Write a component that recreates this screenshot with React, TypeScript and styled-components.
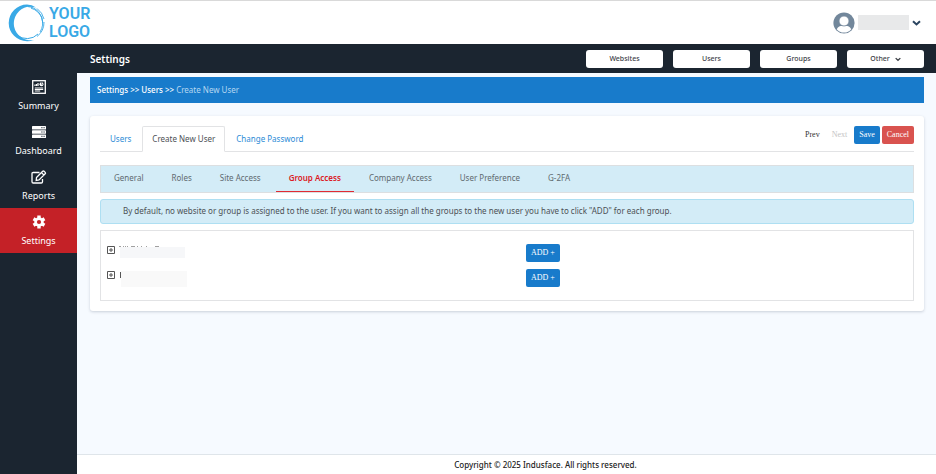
import React from "react";
import styled, { createGlobalStyle, css } from "styled-components";

const color = {
  navy: "#1b2530",
  red: "#c42127",
  blue: "#187bcb",
  sky: "#d3ecf7",
  page: "#f6faff",
  line: "#e2e3e5",
  text: "#4c5055",
};

const GlobalStyle = createGlobalStyle`
  *, *::before, *::after { box-sizing: border-box; }
  body {
    margin: 0;
    background: ${color.page};
    color: ${color.text};
    font: 8px/12px "Noto Sans", sans-serif;
  }
  a { color: inherit; text-decoration: none; }
  button { font: inherit; cursor: pointer; }
  h1, p, ul { margin: 0; padding: 0; }
  ul { list-style: none; }
`;

const Page = styled.div`
  display: flex;
  flex-direction: column;
  min-height: 100vh;
`;

const Header = styled.header`
  display: flex;
  align-items: center;
  justify-content: space-between;
  height: 44px;
  padding: 0 15px 0 8px;
  background: #fff;
  border-top: 1px solid #d9d9d9;
`;

const Logo = styled.a`
  display: flex;
  align-items: center;
  gap: 4px;
  color: #39a9e6;
  font: 600 16px/18px Roboto, sans-serif;
`;

const LogoText = styled.span`
  display: block;
  width: min-content;
`;

const Account = styled.button`
  display: flex;
  align-items: center;
  gap: 3px;
  padding: 0;
  border: 0;
  background: none;
`;

const AccountName = styled.span`
  width: 51px;
  height: 15px;
  background: #e8e9ea;
`;

const Body = styled.div`
  display: flex;
  flex: 1;
`;

const Sidebar = styled.nav`
  flex: 0 0 77px;
  padding-top: 29px;
  background: ${color.navy};
`;

const SideLink = styled.a<{ $active?: boolean }>`
  display: flex;
  flex-direction: column;
  align-items: center;
  gap: 5px;
  height: 45px;
  padding-top: 7px;
  color: #fff;
  font-size: 9px;
  line-height: 14px;
  background: ${(p) => (p.$active ? color.red : "transparent")};
`;

const Main = styled.div`
  display: flex;
  flex: 1;
  flex-direction: column;
  min-width: 0;
`;

const TitleBar = styled.div`
  display: flex;
  align-items: center;
  justify-content: space-between;
  height: 29px;
  padding: 0 12px 0 13px;
  background: ${color.navy};
`;

const Title = styled.h1`
  color: #fff;
  font-size: 10px;
  font-weight: 600;
  line-height: 16px;
`;

const TitleActions = styled.div`
  display: flex;
  gap: 10px;
`;

const TitleButton = styled.button`
  display: flex;
  align-items: center;
  justify-content: center;
  gap: 5px;
  width: 77px;
  height: 18px;
  padding: 0;
  border: 0;
  border-radius: 3px;
  background: #fff;
  color: #3c4046;
  font-size: 7px;
  font-weight: 500;
`;

const Content = styled.main`
  display: flex;
  flex: 1;
  flex-direction: column;
  gap: 13px;
  padding: 4px 12px 24px 13px;
`;

const Breadcrumb = styled.nav`
  display: flex;
  align-items: center;
  gap: 2px;
  height: 26px;
  padding: 0 7px;
  background: ${color.blue};
  color: #fff;
  font-weight: 500;
`;

const Crumb = styled.span`
  color: #b5d7f1;
  font-weight: 400;
`;

const Card = styled.section`
  padding: 10px;
  border-radius: 3px;
  background: #fff;
  box-shadow: 0 1px 3px rgba(40, 60, 80, 0.22);
`;

const CardTop = styled.div`
  display: flex;
  align-items: flex-start;
  justify-content: space-between;
  height: 26px;
  margin-bottom: 13px;
  border-bottom: 1px solid ${color.line};
`;

const Tabs = styled.div`
  display: flex;
  gap: 1px;
`;

const Tab = styled.a<{ $active?: boolean }>`
  display: flex;
  align-items: center;
  height: 26px;
  padding: 0 9px;
  border: 1px solid transparent;
  color: #2b8bd6;
  ${(p) =>
    p.$active &&
    css`
      border-color: ${color.line};
      border-bottom-color: #fff;
      border-radius: 2px 2px 0 0;
      background: #fff;
      color: ${color.text};
    `}
`;

const FormActions = styled.div`
  display: flex;
  gap: 2px;
`;

const actionLook = {
  plain: { bg: "transparent", fg: "#333" },
  primary: { bg: color.blue, fg: "#fff" },
  danger: { bg: "#d9534f", fg: "#fff" },
};

const ActionButton = styled.button<{ $look: keyof typeof actionLook }>`
  height: 18px;
  padding: 0 5px;
  border: 0;
  border-radius: 2px;
  background: ${(p) => actionLook[p.$look].bg};
  color: ${(p) => actionLook[p.$look].fg};
  font: 8px/12px "Liberation Serif", serif;
  &:disabled {
    color: #c4c4c4;
    cursor: default;
  }
`;

const SubNav = styled.nav`
  display: flex;
  gap: 2px;
  height: 28px;
  border: 1px solid #dcdfe1;
  background: ${color.sky};
`;

const SubLink = styled.a<{ $active?: boolean }>`
  padding: 6px 13px 0;
  color: #5f6a70;
  border-bottom: 1px solid transparent;
  ${(p) =>
    p.$active &&
    css`
      border-color: #e02b33;
      color: #dc1a25;
      font-weight: 600;
    `}
`;

const Notice = styled.p`
  margin: 6px 0;
  padding: 5px 22px 6px;
  border: 1px solid #aedff2;
  border-radius: 3px;
  background: ${color.sky};
`;

const GroupList = styled.ul`
  display: grid;
  gap: 7px;
  padding: 13px 6px;
  border: 1px solid ${color.line};
`;

const GroupRow = styled.li`
  display: grid;
  grid-template-columns: 1fr 1fr;
  height: 18px;
`;

const GroupName = styled.div`
  display: flex;
  gap: 4px;
`;

const ExpandButton = styled.button`
  display: flex;
  width: 8px;
  height: 12px;
  padding: 2px 0;
  border: 0;
  background: none;
`;

const RowAction = styled.div`
  padding-left: 19px;
`;

const Footer = styled.footer`
  padding: 4px 0 3px 78px;
  border-top: 1px solid #dfe5ea;
  background: #fff;
  color: #222;
  font-weight: 500;
  text-align: center;
`;

const LogoMark = () => (
  <svg width="37" height="38" viewBox="0 0 37 38" fill="none" stroke="#39a9e6" aria-hidden="true">
    <path
      d="M19 .8A18.2 18.2 0 1 0 26 35.7A17 17 0 0 1 19 .8Z"
      fill="none"
      strokeWidth="0"
    />
    <path d="M28 3.5A18 18 0 0 0 19 .6A18.3 18.3 0 0 0 19 37.2A18 18 0 0 0 26 36A16.8 16.8 0 0 1 19.5 2.8Q24 2.4 28 3.5Z" fill="#39a9e6" strokeWidth="0" />
    <path d="M19.5 2.5A16.6 16.6 0 0 1 34.8 19" strokeWidth="1" />
    <path d="M23 4.2A15.6 15.6 0 0 1 32 28" strokeWidth="0.9" />
    <path d="M29 4.5A18 18 0 0 1 36 15M36 18A18 18 0 0 1 29 32.5" strokeWidth="0.9" />
    <path d="M9 31A15.5 15.5 0 0 0 30 30" strokeWidth="1" />
  </svg>
);

const Avatar = () => (
  <svg width="22" height="22" viewBox="0 0 22 22" aria-hidden="true">
    <circle cx="11" cy="11" r="10.6" fill="#72879b" />
    <path d="M3.7 17.2C5.2 14.4 7.2 13.9 8.8 13.9h4.4c1.6 0 3.6.5 5.1 3.3A9.6 9.6 0 0 1 3.7 17.2Z" fill="#fff" />
    <circle cx="11" cy="9" r="5" fill="#fff" stroke="#72879b" strokeWidth=".8" />
  </svg>
);

const Chevron = ({ size, stroke }: { size: number; stroke: string }) => (
  <svg width={size} height={size} viewBox="0 0 9 9" fill="none" stroke={stroke} strokeWidth="2" aria-hidden="true">
    <path d="M1 3.2 4.5 6.5 8 3.2" />
  </svg>
);

const SummaryIcon = () => (
  <svg width="14" height="14" viewBox="0 0 14 14" fill="none" stroke="#fff" strokeWidth="1" aria-hidden="true">
    <rect x=".7" y=".7" width="12.6" height="12.6" strokeWidth="1.3" />
    <path d="M3 6V4.6M4.5 6V4M6 6V3" strokeWidth="1.2" />
    <path d="M2.8 8h8.4M2.8 9.5h8.4M2.8 11h5.4" />
    <circle cx="9.5" cy="4.3" r="2" fill="#fff" stroke="none" />
    <path d="M9.5 4.3V2M9.5 4.3h2.2" stroke={color.navy} strokeWidth=".5" />
  </svg>
);

const ServerIcon = () => (
  <svg width="14" height="14" viewBox="0 0 14 14" fill="#fff" aria-hidden="true">
    <rect y="1" width="14" height="3.5" rx=".6" />
    <rect y="5.3" width="14" height="3.5" rx=".6" />
    <rect y="9.6" width="14" height="3.5" rx=".6" />
    <path d="M9.3 2.7h1.2M11.5 2.7h1.2M9.3 7h1.2M11.5 7h1.2M9.3 11.3h1.2M11.5 11.3h1.2" stroke={color.navy} />
  </svg>
);

const EditIcon = () => (
  <svg width="16" height="14" viewBox="0 0 16 14" fill="none" stroke="#fff" strokeWidth="1.3" aria-hidden="true">
    <path d="M8.5 2.5H2.2Q1 2.5 1 3.7v8.1Q1 13 2.2 13h8.1q1.2 0 1.2-1.2V9" />
    <path d="m5.5 7.5 6.2-6.2q.7-.7 1.4 0l1.1 1.1q.7.7 0 1.4L8 10l-2.8.4ZM10.5 2.6l2.4 2.4" />
  </svg>
);

const GearIcon = () => (
  <svg width="14" height="14" viewBox="0 0 14 14" aria-hidden="true">
    <g stroke="#fff" strokeWidth="3.4">
      <path d="M7 .6v12.8M1.5 3.8l11 6.4M1.5 10.2l11-6.4" />
    </g>
    <circle cx="7" cy="7" r="4.7" fill="#fff" />
    <circle cx="7" cy="7" r="2.1" fill={color.red} />
  </svg>
);

const PlusBox = () => (
  <svg width="8" height="8" viewBox="0 0 8 8" fill="none" stroke="#555" aria-hidden="true">
    <path d="M.5.5h7v7h-7Z" />
    <path d="M4 2v4M2 4h4" />
  </svg>
);

/* Slivers of the concealed group names that stay visible above their covers. */
const NameEdgeWide = () => (
  <svg width="68" height="16" viewBox="0 0 68 16" aria-hidden="true">
    <rect x="1" y="3" width="65" height="11" fill="#f6f7f9" />
    <path d="M0 2.5h2M4 2.5h1M6 2.5h1M8 2.5h1M12 2.5h4M18 2.5h1M22 2.5h1M27 2.5h1M36 2.5h4" stroke="#a0a0a0" />
  </svg>
);

const NameEdgeNarrow = () => (
  <svg width="68" height="18" viewBox="0 0 68 18" aria-hidden="true">
    <path d="M1 3h1v6H1Z" fill="#555" />
    <rect x="2" y="2" width="66" height="16" fill="#f9f9f9" />
  </svg>
);

const sideLinks = [
  { label: "Summary", icon: <SummaryIcon /> },
  { label: "Dashboard", icon: <ServerIcon /> },
  { label: "Reports", icon: <EditIcon /> },
  { label: "Settings", icon: <GearIcon />, active: true },
];

const tabs = ["Users", "Create New User", "Change Password"];
const sections = ["General", "Roles", "Site Access", "Group Access", "Company Access", "User Preference", "G-2FA"];
const groups = [<NameEdgeWide key="a" />, <NameEdgeNarrow key="b" />];

export default function App() {
  return (
    <>
      <GlobalStyle />
      <Page>
        <Header>
          <Logo href="#">
            <LogoMark />
            <LogoText>YOUR LOGO</LogoText>
          </Logo>
          <Account aria-label="Account menu">
            <Avatar />
            <AccountName />
            <Chevron size={9} stroke="#2b4560" />
          </Account>
        </Header>
        <Body>
          <Sidebar>
            {sideLinks.map((l) => (
              <SideLink key={l.label} href="#" $active={l.active}>
                {l.icon}
                {l.label}
              </SideLink>
            ))}
          </Sidebar>
          <Main>
            <TitleBar>
              <Title>Settings</Title>
              <TitleActions>
                <TitleButton>Websites</TitleButton>
                <TitleButton>Users</TitleButton>
                <TitleButton>Groups</TitleButton>
                <TitleButton>
                  Other <Chevron size={6} stroke="#3c4046" />
                </TitleButton>
              </TitleActions>
            </TitleBar>
            <Content>
              <Breadcrumb>
                <a href="#">Settings</a> &gt;&gt; <a href="#">Users</a> &gt;&gt; <Crumb>Create New User</Crumb>
              </Breadcrumb>
              <Card>
                <CardTop>
                  <Tabs>
                    {tabs.map((t) => (
                      <Tab key={t} href="#" $active={t === "Create New User"}>
                        {t}
                      </Tab>
                    ))}
                  </Tabs>
                  <FormActions>
                    <ActionButton $look="plain">Prev</ActionButton>
                    <ActionButton $look="plain" disabled>
                      Next
                    </ActionButton>
                    <ActionButton $look="primary">Save</ActionButton>
                    <ActionButton $look="danger">Cancel</ActionButton>
                  </FormActions>
                </CardTop>
                <SubNav>
                  {sections.map((s) => (
                    <SubLink key={s} href="#" $active={s === "Group Access"}>
                      {s}
                    </SubLink>
                  ))}
                </SubNav>
                <Notice>
                  By default, no website or group is assigned to the user. If you want to assign all the groups to the
                  new user you have to click "ADD" for each group.
                </Notice>
                <GroupList>
                  {groups.map((name, i) => (
                    <GroupRow key={i}>
                      <GroupName>
                        <ExpandButton aria-label="Expand group">
                          <PlusBox />
                        </ExpandButton>
                        {name}
                      </GroupName>
                      <RowAction>
                        <ActionButton $look="primary">ADD +</ActionButton>
                      </RowAction>
                    </GroupRow>
                  ))}
                </GroupList>
              </Card>
            </Content>
            <Footer>Copyright © 2025 Indusface. All rights reserved.</Footer>
          </Main>
        </Body>
      </Page>
    </>
  );
}
